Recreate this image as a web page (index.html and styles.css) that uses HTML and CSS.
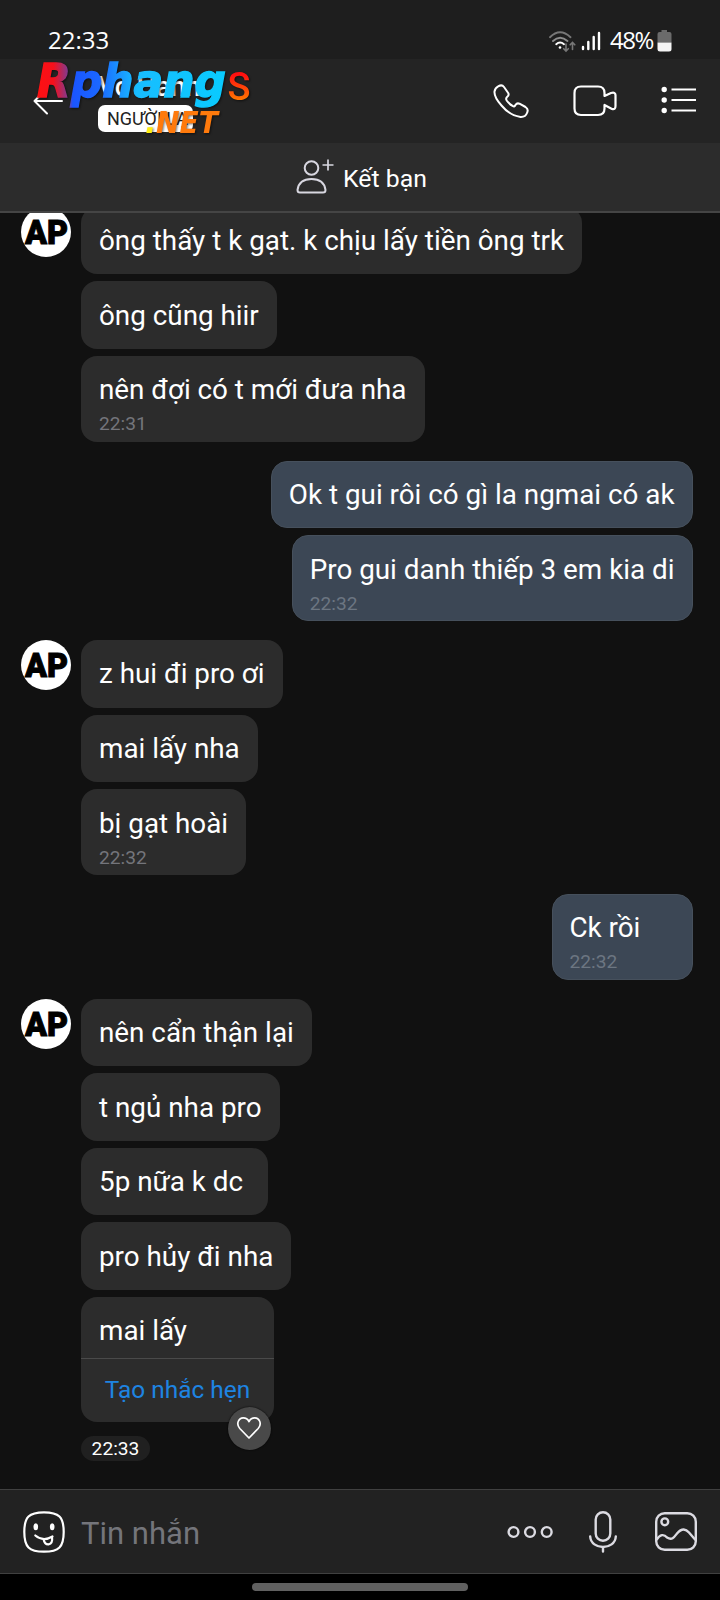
FILE: index.html
```html
<!DOCTYPE html>
<html lang="vi">
<head>
<meta charset="utf-8">
<title>Chat</title>
<link rel="stylesheet" href="styles.css">
</head>
<body>
<div class="screen">
  <div class="status">
    <span class="clock">22:33</span>
    <div class="status-right">
      <svg class="wifi" width="30" height="24" viewBox="0 0 30 24" fill="none" stroke-linecap="round" stroke-width="1.9">
        <path d="M2 7.2Q12 -2.6 22.500 7.200" stroke="#777"/>
        <path d="M5 11Q12 4.500 19.500 11" stroke="#8c8c8c"/>
        <path d="M8.200 14.200Q12 10.700 16 14.200" stroke="#fff"/>
        <circle cx="12" cy="17.500" r="1.300" fill="#fff"/>
        <path d="M18 14V21M15.700 18.700L18 21L20.300 18.700M24.500 19.500V12.500M22.200 14.800L24.500 12.500L26.800 14.800" stroke="#777" stroke-width="1.600"/>
      </svg>
      <svg class="signal" width="20" height="22" viewBox="0 0 20 22" stroke="#fff" stroke-width="2.400" stroke-linecap="round"><path d="M2 17V19M7.300 12V19M12.700 7V19M18 3V19"/></svg>
      <span class="percent">48%</span>
      <svg class="battery" width="15" height="22" viewBox="0 0 15 22"><path d="M4.500 0H10V2H12.500Q14.500 2 14.500 4V12.500H.5V4Q.5 2 2.500 2H4.500Z" fill="#6b6b6b"/><path d="M.5 12.500H14.500V19Q14.500 21.500 12 21.500H3Q.5 21.500 .5 19Z" fill="#f5f5f5"/></svg>
    </div>
  </div>

  <header class="header">
    <svg class="back" width="31" height="28" viewBox="0 0 31 28" fill="none" stroke="#fff" stroke-width="2" stroke-linecap="round" stroke-linejoin="round"><path d="M29 14H1.500M14 1.500L1.500 14L14 26.500"/></svg>
    <div class="contact">
      <div class="name">Võ Hann</div>
      <div class="tag">NGƯỜI LẠ</div>
    </div>
    <svg class="watermark" width="226" height="80" viewBox="0 0 226 80">
      <defs>
        <linearGradient id="word" gradientUnits="userSpaceOnUse" x1="0" x2="194" y1="0" y2="0">
          <stop offset="0" stop-color="#ff1010"/><stop offset=".09" stop-color="#f5101c"/><stop offset=".165" stop-color="#803a90"/><stop offset=".19" stop-color="#1a55ff"/><stop offset=".33" stop-color="#1b68ff"/><stop offset=".52" stop-color="#18bdff"/><stop offset="1" stop-color="#08ccff"/>
        </linearGradient>
        <linearGradient id="end" x1="0" x2="0" y1="0" y2="1"><stop offset=".25" stop-color="#ff1010"/><stop offset=".8" stop-color="#ff7800"/></linearGradient>
      </defs>
      <text class="wm-word" x="1" y="38" textLength="189" lengthAdjust="spacingAndGlyphs" fill="url(#word)" stroke="url(#word)">Rphang</text>
      <text class="wm-s" x="191.500" y="40.500" textLength="23" lengthAdjust="spacingAndGlyphs" fill="url(#end)">S</text>
      <text class="wm-net" x="120" y="74" textLength="62" lengthAdjust="spacingAndGlyphs" fill="#ff7a0c">NET</text>
      <text class="wm-net" x="109" y="74" fill="#ffee10">.</text>
    </svg>
    <svg class="call" width="38" height="36" viewBox="0 0 38 36" fill="none" stroke="#fff" stroke-width="2" stroke-linejoin="round"><path d="M5.500 2.200Q9 .2 11 3L15.200 9Q16.300 11 14.500 12.500Q12.300 14.300 13.700 16.500Q16.500 20.500 20 22.200Q21.500 23 22.600 20.800Q24 18.700 26.500 19.700L32.500 23Q35.700 25 34.200 28.500Q32.500 33.300 27.500 33Q17 31.700 8.500 21.500Q1 13 1.500 7.500Q2 4 5.500 2.200Z"/></svg>
    <svg class="video" width="44" height="32" viewBox="0 0 44 32" fill="none" stroke="#fff" stroke-width="2.200" stroke-linejoin="round"><path d="M8 1.500H25Q31.500 1.500 31.500 8V11L38 8Q42.500 6.800 42.500 10V21Q42.500 25 39 24L31.500 20V23.500Q31.500 30 25 30H8Q1.500 30 1.500 23.500V8Q1.500 1.500 8 1.500Z"/></svg>
    <svg class="menu" width="36" height="28" viewBox="0 0 36 28" stroke="#fff" stroke-width="2" fill="#fff"><path d="M10.500 3.500H35M10.500 14H35M10.500 24.500H35"/><circle cx="3.200" cy="3.500" r="1.700"/><circle cx="3.200" cy="14" r="1.700"/><circle cx="3.200" cy="24.500" r="1.700"/></svg>
  </header>

  <div class="friend">
    <svg width="38" height="36" viewBox="0 0 38 36" fill="none" stroke="#d8d7e0" stroke-width="2"><circle cx="15.500" cy="9" r="6.800"/><path d="M1.500 31C2.500 23.500 8 20 15.500 20S28.500 23.500 29.500 31Q29.500 33.500 27 33.500H4Q1.500 33.500 1.500 31Z"/><path d="M32 .5V11.500M26.500 6H37.500" stroke-width="1.700"/></svg>
    <span class="friend-label">Kết bạn</span>
  </div>

  <main class="chat">
    <section class="group in">
      <div class="avatar"><svg width="50" height="50" viewBox="0 0 50 50"><text class="ap" x="4" y="36.500" textLength="43" lengthAdjust="spacingAndGlyphs">AP</text></svg></div>
      <div class="bubble">ông thấy t k gạt. k chịu lấy tiền ông trk</div>
      <div class="bubble">ông cũng hiir</div>
      <div class="bubble timed">nên đợi có t mới đưa nha<time>22:31</time></div>
    </section>
    <section class="group out">
      <div class="bubble">Ok t gui rôi có gì la ngmai có ak</div>
      <div class="bubble timed">Pro gui danh thiếp 3 em kia di<time>22:32</time></div>
    </section>
    <section class="group in">
      <div class="avatar"><svg width="50" height="50" viewBox="0 0 50 50"><text class="ap" x="4" y="36.500" textLength="43" lengthAdjust="spacingAndGlyphs">AP</text></svg></div>
      <div class="bubble">z hui đi pro ơi</div>
      <div class="bubble">mai lấy nha</div>
      <div class="bubble timed">bị gạt hoài<time>22:32</time></div>
    </section>
    <section class="group out">
      <div class="bubble timed">Ck rồi<time>22:32</time></div>
    </section>
    <section class="group in">
      <div class="avatar"><svg width="50" height="50" viewBox="0 0 50 50"><text class="ap" x="4" y="36.500" textLength="43" lengthAdjust="spacingAndGlyphs">AP</text></svg></div>
      <div class="bubble">nên cẩn thận lại</div>
      <div class="bubble">t ngủ nha pro</div>
      <div class="bubble">5p nữa k dc&nbsp;</div>
      <div class="bubble">pro hủy đi nha</div>
      <div class="bubble reminder">
        <div class="reminder-text">mai lấy</div>
        <div class="reminder-link">Tạo nhắc hẹn</div>
        <div class="like"><svg width="26" height="24" viewBox="0 0 26 24" fill="none" stroke="#fff" stroke-width="1.700" stroke-linejoin="round"><path d="M13 22L3.800 12.500C-.5 7.500 3 1.800 7.200 1.800C10 1.800 12 3.500 13 5.500C14 3.500 16 1.800 18.800 1.800C23 1.800 26.500 7.500 22.200 12.500Z"/></svg></div>
      </div>
      <div class="stamp">22:33</div>
    </section>
  </main>

  <footer class="composer">
    <svg class="sticker" width="42" height="42" viewBox="0 0 42 42" fill="none" stroke="#fff" stroke-width="2.200" stroke-linecap="round"><path d="M21 1.300C36 1.300 40.700 6 40.700 21S36 40.700 21 40.700S1.300 36 1.300 21S6 1.300 21 1.300Z"/><g fill="#fff" stroke="none"><ellipse cx="12.800" cy="15.800" rx="2.300" ry="3.500"/><ellipse cx="29.200" cy="15.800" rx="2.300" ry="3.500"/></g><path d="M12.300 24.500Q20 31 29.500 25.500M20.700 28.500Q21.500 33.500 25.500 33.300Q30 32.500 29 26"/></svg>
    <span class="placeholder">Tin nhắn</span>
    <svg class="more" width="46" height="14" viewBox="0 0 46 14" fill="none" stroke="#dcdbe2" stroke-width="2.400"><circle cx="6.500" cy="7" r="4.900"/><circle cx="23" cy="7" r="4.900"/><circle cx="39.700" cy="7" r="4.900"/></svg>
    <svg class="mic" width="28" height="42" viewBox="0 0 28 42" fill="none" stroke="#dcdbe2" stroke-width="2.400" stroke-linecap="round"><rect x="6.700" y="1.200" width="14.600" height="28.600" rx="7.300"/><path d="M1.200 25.500C2 39.500 26 39.500 26.800 25.500M14 36.500V40.500"/></svg>
    <svg class="photo" width="42" height="39" viewBox="0 0 42 39" fill="none" stroke="#dcdbe2" stroke-width="2.400"><rect x="1.200" y="1.200" width="39.600" height="36.600" rx="8.500"/><circle cx="9.800" cy="9.800" r="3.400"/><path d="M1.500 28C5 22 9 22 12 25.500C17 28.500 19 25.500 22 21.500C27 15.500 31 17 34 20.500L40.500 28"/></svg>
  </footer>
  <div class="navbar"><div class="pill"></div></div>
</div>
</body>
</html>
```
FILE: styles.css
```css
* { box-sizing: border-box; }
body { margin: 0; background: #000; }
.screen { width: 720px; height: 1600px; display: flex; flex-direction: column; overflow: hidden; font-family: Roboto, "Noto Sans", sans-serif; color: #fff; }
.screen > * { flex-shrink: 0; }
svg { display: block; flex: none; }

.status { height: 59px; background: #1e1e1e; display: flex; justify-content: space-between; padding: 26px 48px 0 48px; }
.clock, .percent { font-family: "Open Sans", sans-serif; font-size: 24px; line-height: 27px; }
.status-right { display: flex; align-items: flex-start; }
.wifi { margin-top: 4px; }
.signal { margin: 4px 9px 0 3px; }
.percent { width: 47px; letter-spacing: -1.500px; }
.battery { margin-top: 4px; }

.header { height: 84px; background: #242424; display: flex; align-items: flex-start; position: relative; padding-right: 23px; }
.back { margin: 28px 0 0 33px; }
.contact { margin: 11px 0 0 34px; width: 110px; white-space: nowrap; }
.name { font-size: 27px; line-height: 34px; font-weight: 500; }
.tag { width: 95px; height: 27px; margin-top: 1px; border-radius: 7px; background: #fff; color: #222; font-size: 18px; line-height: 27px; padding-left: 9px; }
.watermark { position: absolute; left: 36px; top: 0; overflow: visible; filter: drop-shadow(1px 1px 1px #0008); }
.wm-word { font: italic bold 47px "DejaVu Sans", sans-serif; stroke-width: 1.500px; }
.wm-s { font: 500 39px Roboto, sans-serif; }
.wm-net { font: italic bold 30px "DejaVu Sans", sans-serif; }
.call { margin: 25px 0 0 auto; }
.video { margin: 26px 0 0 42px; }
.menu { margin: 27px 0 0 44px; }

.friend { height: 70px; background: #2c2c2c; border-bottom: 2px solid #454545; display: flex; align-items: center; justify-content: center; gap: 9px; font-size: 24.800px; padding-left: 3px; }
.friend-label { padding-top: 2px; }

.chat { height: 1276px; background: #111; overflow: hidden; display: flex; flex-direction: column; gap: 19px; padding: 0 27.500px 0 81px; }
.chat > :first-child { margin-top: -6.400px; }
.group { position: relative; display: flex; flex-direction: column; align-items: flex-start; gap: 7px; flex: none; }
.out { align-items: flex-end; }
.avatar { position: absolute; left: -60px; top: 0; width: 50px; height: 50px; border-radius: 50%; background: #fff; }
.ap { font: 900 34px Roboto, sans-serif; fill: #000; stroke: #000; }
.bubble { height: 67.670px; padding: 17.500px 18px; border-radius: 16px; background: #2c2c2c; font-size: 27.820px; line-height: 33px; white-space: nowrap; }
.out .bubble { background: #3c4755; border: 1px solid #46505c; padding: 16.500px 17px; min-width: 141px; }
.timed { height: 85.670px; }
time { display: block; font-size: 19.200px; line-height: 22px; margin-top: 7px; color: #74757b; }
.out time { color: #6c7682; }
.reminder { position: relative; width: 193px; height: 124.500px; padding: 0; }
.reminder-text { height: 61.500px; padding: 17px 18px 0; border-bottom: 1px solid #4a4a4a; }
.reminder-link { font-size: 24.400px; line-height: 62px; text-align: center; color: #1e84e2; }
.like { position: absolute; left: 146.500px; top: 109.500px; width: 43px; height: 43px; border-radius: 50%; background: #494949; box-shadow: 0 0 2px #000; display: flex; align-items: center; justify-content: center; }
.stamp { margin-top: 7px; width: 69px; height: 25px; border-radius: 13px; background: #202020; font-size: 19.200px; line-height: 26px; text-align: center; }

.composer { height: 85px; background: #222; border-top: 1px solid #404040; border-bottom: 1px solid #404040; display: flex; align-items: center; padding: 0 23px 0 23px; }
.placeholder { font-size: 31px; color: #74757b; margin-left: 16px; padding-top: 4px; }
.more { margin-left: auto; }
.mic { margin-left: 36px; }
.photo { margin-left: 38px; }
.navbar { height: 26px; background: #000; padding-top: 9px; }
.pill { width: 216px; height: 8px; margin: 0 auto; border-radius: 4px; background: #606060; }
```
